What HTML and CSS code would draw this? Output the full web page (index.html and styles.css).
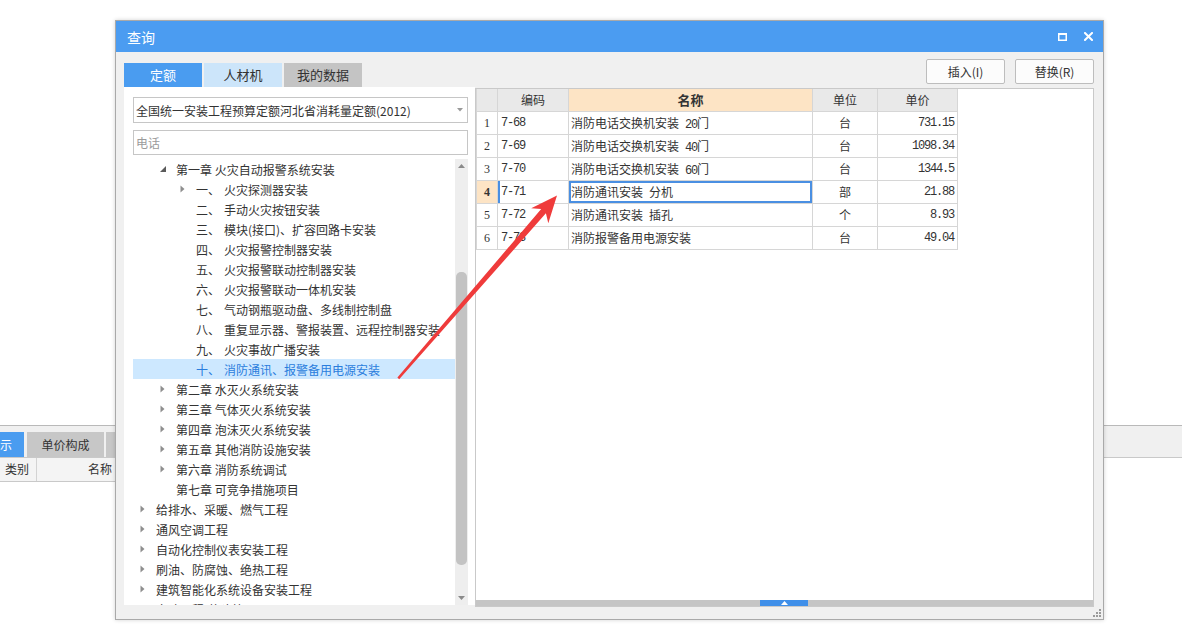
FILE: index.html
```html
<!DOCTYPE html>
<html lang="zh-CN">
<head>
<meta charset="utf-8">
<title>查询</title>
<link rel="stylesheet" href="styles.css">
</head>
<body>
<div class="app">
  <div class="app-band">
    <div class="app-tab app-tab-active">显示</div>
    <div class="app-tab app-tab-gray">单价构成</div>
    <div class="app-tab app-tab-gray app-tab-more">工料机显示</div>
  </div>
  <div class="app-grid-head">
    <div class="app-col app-col-type">类别</div>
    <div class="app-col app-col-name">名称</div>
  </div>
</div>

<div class="dialog">
  <div class="titlebar">
    <span class="title">查询</span>
    <div class="win-btns">
      <svg class="win-icon" width="9" height="8" viewBox="0 0 9 8"><rect x="0.75" y="1" width="7.5" height="6.25" fill="none" stroke="#fff" stroke-width="1.5"/><rect x="0" y="0" width="9" height="2" fill="#fff"/></svg>
      <svg class="win-icon" width="9" height="9" viewBox="0 0 9 9"><path d="M1 1 L8 8 M8 1 L1 8" stroke="#fff" stroke-width="2" stroke-linecap="square"/></svg>
    </div>
  </div>

  <div class="toolbar">
    <div class="tabs">
      <div class="tab tab-active">定额</div>
      <div class="tab tab-light">人材机</div>
      <div class="tab tab-gray">我的数据</div>
    </div>
    <div class="actions">
      <button class="btn">插入(I)</button>
      <button class="btn">替换(R)</button>
    </div>
  </div>

  <div class="main">
    <div class="left">
      <div class="combo">
        <span class="combo-text">全国统一安装工程预算定额河北省消耗量定额(2012)</span>
        <svg width="6" height="4" viewBox="0 0 6 4"><path d="M0 0 L6 0 L3 3.5Z" fill="#9a9a9a"/></svg>
      </div>
      <div class="search">电话</div>
      <div class="tree-wrap">
        <div class="tree">
          <div class="row l2"><span class="tw"><svg width="6" height="6" viewBox="0 0 6 6"><path d="M6 0 L6 6 L0 6Z" fill="#5a5a5a"/></svg></span><span class="txt">第一章 火灾自动报警系统安装</span></div>
          <div class="row l3"><span class="tw"><svg width="5" height="8" viewBox="0 0 5 8"><path d="M0.5 0.5 L4.5 4 L0.5 7.5Z" fill="#8e8e8e"/></svg></span><span class="num">一、</span><span class="txt">火灾探测器安装</span></div>
          <div class="row l3"><span class="tw"></span><span class="num">二、</span><span class="txt">手动火灾按钮安装</span></div>
          <div class="row l3"><span class="tw"></span><span class="num">三、</span><span class="txt">模块(接口)、扩容回路卡安装</span></div>
          <div class="row l3"><span class="tw"></span><span class="num">四、</span><span class="txt">火灾报警控制器安装</span></div>
          <div class="row l3"><span class="tw"></span><span class="num">五、</span><span class="txt">火灾报警联动控制器安装</span></div>
          <div class="row l3"><span class="tw"></span><span class="num">六、</span><span class="txt">火灾报警联动一体机安装</span></div>
          <div class="row l3"><span class="tw"></span><span class="num">七、</span><span class="txt">气动钢瓶驱动盘、多线制控制盘</span></div>
          <div class="row l3"><span class="tw"></span><span class="num">八、</span><span class="txt">重复显示器、警报装置、远程控制器安装</span></div>
          <div class="row l3"><span class="tw"></span><span class="num">九、</span><span class="txt">火灾事故广播安装</span></div>
          <div class="row l3 selected"><span class="tw"></span><span class="num">十、</span><span class="txt">消防通讯、报警备用电源安装</span></div>
          <div class="row l2"><span class="tw"><svg width="5" height="8" viewBox="0 0 5 8"><path d="M0.5 0.5 L4.5 4 L0.5 7.5Z" fill="#8e8e8e"/></svg></span><span class="txt">第二章 水灭火系统安装</span></div>
          <div class="row l2"><span class="tw"><svg width="5" height="8" viewBox="0 0 5 8"><path d="M0.5 0.5 L4.5 4 L0.5 7.5Z" fill="#8e8e8e"/></svg></span><span class="txt">第三章 气体灭火系统安装</span></div>
          <div class="row l2"><span class="tw"><svg width="5" height="8" viewBox="0 0 5 8"><path d="M0.5 0.5 L4.5 4 L0.5 7.5Z" fill="#8e8e8e"/></svg></span><span class="txt">第四章 泡沫灭火系统安装</span></div>
          <div class="row l2"><span class="tw"><svg width="5" height="8" viewBox="0 0 5 8"><path d="M0.5 0.5 L4.5 4 L0.5 7.5Z" fill="#8e8e8e"/></svg></span><span class="txt">第五章 其他消防设施安装</span></div>
          <div class="row l2"><span class="tw"><svg width="5" height="8" viewBox="0 0 5 8"><path d="M0.5 0.5 L4.5 4 L0.5 7.5Z" fill="#8e8e8e"/></svg></span><span class="txt">第六章 消防系统调试</span></div>
          <div class="row l2"><span class="tw"></span><span class="txt">第七章 可竞争措施项目</span></div>
          <div class="row l1"><span class="tw"><svg width="5" height="8" viewBox="0 0 5 8"><path d="M0.5 0.5 L4.5 4 L0.5 7.5Z" fill="#8e8e8e"/></svg></span><span class="txt">给排水、采暖、燃气工程</span></div>
          <div class="row l1"><span class="tw"><svg width="5" height="8" viewBox="0 0 5 8"><path d="M0.5 0.5 L4.5 4 L0.5 7.5Z" fill="#8e8e8e"/></svg></span><span class="txt">通风空调工程</span></div>
          <div class="row l1"><span class="tw"><svg width="5" height="8" viewBox="0 0 5 8"><path d="M0.5 0.5 L4.5 4 L0.5 7.5Z" fill="#8e8e8e"/></svg></span><span class="txt">自动化控制仪表安装工程</span></div>
          <div class="row l1"><span class="tw"><svg width="5" height="8" viewBox="0 0 5 8"><path d="M0.5 0.5 L4.5 4 L0.5 7.5Z" fill="#8e8e8e"/></svg></span><span class="txt">刷油、防腐蚀、绝热工程</span></div>
          <div class="row l1"><span class="tw"><svg width="5" height="8" viewBox="0 0 5 8"><path d="M0.5 0.5 L4.5 4 L0.5 7.5Z" fill="#8e8e8e"/></svg></span><span class="txt">建筑智能化系统设备安装工程</span></div>
          <div class="row l1"><span class="tw"><svg width="5" height="8" viewBox="0 0 5 8"><path d="M0.5 0.5 L4.5 4 L0.5 7.5Z" fill="#8e8e8e"/></svg></span><span class="txt">市政工程(仿建筑)</span></div>
        </div>
        <div class="vscroll">
          <div class="vs-btn"><svg width="7" height="4" viewBox="0 0 7 4"><path d="M0 4 L3.5 0 L7 4Z" fill="#8a8a8a"/></svg></div>
          <div class="vs-track"><div class="vs-thumb"></div></div>
          <div class="vs-btn"><svg width="7" height="4" viewBox="0 0 7 4"><path d="M0 0 L7 0 L3.5 4Z" fill="#8a8a8a"/></svg></div>
        </div>
      </div>
    </div>

    <div class="right">
      <div class="grid-area">
        <div class="grid">
          <div class="c hd"></div>
          <div class="c hd ctr">编码</div>
          <div class="c hd hd-active ctr">名称</div>
          <div class="c hd ctr">单位</div>
          <div class="c hd ctr">单价</div>

          <div class="c rn">1</div>
          <div class="c code">7-68</div>
          <div class="c name">消防电话交换机安装<span class="m"> 20</span>门</div>
          <div class="c ctr">台</div>
          <div class="c price">731.15</div>

          <div class="c rn">2</div>
          <div class="c code">7-69</div>
          <div class="c name">消防电话交换机安装<span class="m"> 40</span>门</div>
          <div class="c ctr">台</div>
          <div class="c price">1098.34</div>

          <div class="c rn">3</div>
          <div class="c code">7-70</div>
          <div class="c name">消防电话交换机安装<span class="m"> 60</span>门</div>
          <div class="c ctr">台</div>
          <div class="c price">1344.5</div>

          <div class="c rn rn-active">4</div>
          <div class="c code code-active">7-71</div>
          <div class="c name name-active">消防通讯安装<span class="m"> </span>分机</div>
          <div class="c ctr">部</div>
          <div class="c price">21.88</div>

          <div class="c rn">5</div>
          <div class="c code">7-72</div>
          <div class="c name">消防通讯安装<span class="m"> </span>插孔</div>
          <div class="c ctr">个</div>
          <div class="c price">8.93</div>

          <div class="c rn">6</div>
          <div class="c code">7-73</div>
          <div class="c name">消防报警备用电源安装</div>
          <div class="c ctr">台</div>
          <div class="c price">49.04</div>
        </div>
      </div>
      <div class="hbar">
        <div class="hthumb"><svg width="7" height="4" viewBox="0 0 7 4"><path d="M0 4 L3.5 0 L7 4Z" fill="#fff"/></svg></div>
      </div>
    </div>
  </div>

  <div class="footer">
    <svg width="8" height="8" viewBox="0 0 8 8">
      <rect x="6" y="0" width="2" height="2" fill="#9a9a9a"/>
      <rect x="3" y="3" width="2" height="2" fill="#9a9a9a"/>
      <rect x="6" y="3" width="2" height="2" fill="#9a9a9a"/>
      <rect x="0" y="6" width="2" height="2" fill="#9a9a9a"/>
      <rect x="3" y="6" width="2" height="2" fill="#9a9a9a"/>
      <rect x="6" y="6" width="2" height="2" fill="#9a9a9a"/>
    </svg>
  </div>
</div>

<svg class="annot" width="1182" height="632" viewBox="0 0 1182 632">
  <polygon points="557,195.5 548.3,223.2 545.9,213.3 399.2,379.2 397.4,377.6 541.2,209.0 531.2,208.3" fill="#ef3b3b"/>
</svg>
</body>
</html>
```

FILE: styles.css
```css
* { box-sizing: border-box; }

html, body {
  margin: 0;
  padding: 0;
}

body {
  width: 1182px;
  height: 632px;
  overflow: hidden;
  position: relative;
  background: #ffffff;
  font-family: "Noto Sans CJK SC", "Microsoft YaHei", sans-serif;
  font-size: 12px;
  color: #333333;
}

/* ---------- background application ---------- */
.app {
  padding-top: 425px;
}

.app-band {
  height: 33px;
  border-top: 1px solid #b9b9b9;
  border-bottom: 1px solid #c9c9c9;
  background: #f0f0f0;
  padding-top: 6px;
  display: flex;
  align-items: flex-end;
}

.app-tab {
  height: 25px;
  line-height: 25px;
  text-align: center;
  white-space: nowrap;
  overflow: hidden;
}

.app-tab-active {
  width: 48px;
  margin-left: -24px;
  background: #4a9cf0;
  color: #ffffff;
}

.app-tab-gray {
  width: 77px;
  margin-left: 3px;
  background: #c7c7c7;
  color: #333333;
}

.app-tab-more {
  width: 90px;
  margin-left: 2px;
}

.app-grid-head {
  width: 115px;
  height: 24px;
  display: flex;
  background: #f4f4f4;
  border-bottom: 1px solid #c9c9c9;
}

.app-col {
  line-height: 22px;
}

.app-col-type {
  width: 37px;
  padding-left: 5px;
  border-right: 1px solid #d3d3d3;
}

.app-col-name {
  flex: 1;
  text-align: right;
  padding-right: 3px;
}

/* ---------- dialog ---------- */
.dialog {
  position: absolute;
  left: 115px;
  top: 20px;
  width: 989px;
  height: 600px;
  border: 1px solid #a9a9a9;
  background: #f0f0f0;
  display: flex;
  flex-direction: column;
  box-shadow: 0 0 4px rgba(0, 0, 0, 0.18);
}

.titlebar {
  height: 31px;
  flex: none;
  background: #4b9cf1;
  color: #ffffff;
  font-size: 14px;
  display: flex;
  align-items: center;
  justify-content: space-between;
  padding: 0 10px 0 11px;
}

.win-btns {
  display: flex;
  align-items: center;
  gap: 17px;
}

.win-icon {
  display: block;
}

.toolbar {
  height: 35px;
  flex: none;
  display: flex;
  justify-content: space-between;
  padding: 0 9px 0 8px;
}

.tabs {
  align-self: flex-end;
  display: flex;
  gap: 2px;
}

.tab {
  width: 78px;
  height: 24px;
  line-height: 24px;
  text-align: center;
  font-size: 13px;
}

.tab-active {
  background: #4a9cf0;
  color: #ffffff;
}

.tab-light {
  background: #cce5fa;
  color: #333333;
}

.tab-gray {
  background: #c4c4c4;
  color: #333333;
}

.actions {
  padding-top: 7px;
  display: flex;
  gap: 10px;
}

.btn {
  width: 79px;
  height: 25px;
  border: 1px solid #bdbdbd;
  border-radius: 2px;
  background: #fcfcfc;
  font-family: inherit;
  font-size: 12px;
  color: #333333;
  padding: 0;
}

.main {
  height: 520px;
  flex: none;
  display: flex;
  align-items: flex-start;
  padding: 0 9px 0 8px;
}

/* ---------- left panel ---------- */
.left {
  width: 351px;
  height: 518px;
  background: #ffffff;
  padding: 10px 7px 0 9px;
  display: flex;
  flex-direction: column;
}

.combo {
  height: 26px;
  flex: none;
  border: 1px solid #c6c6c6;
  display: flex;
  align-items: center;
  justify-content: space-between;
  padding: 0 4px 0 2px;
}

.combo svg {
  display: block;
}

.search {
  height: 25px;
  flex: none;
  margin-top: 7px;
  border: 1px solid #c6c6c6;
  color: #9b9b9b;
  line-height: 23px;
  padding-left: 2px;
}

.tree-wrap {
  margin-top: 4px;
  flex: 1;
  min-height: 0;
  display: flex;
}

.tree {
  flex: 1;
  min-width: 0;
  overflow: hidden;
}

.row {
  height: 20px;
  display: flex;
  align-items: center;
  white-space: nowrap;
  color: #333333;
}

.row.l1 { padding-left: 7px; }
.row.l2 { padding-left: 27px; }
.row.l3 { padding-left: 47px; }

.row.selected {
  background: #cde8ff;
  color: #2a7ddd;
}

.tw {
  width: 16px;
  flex: none;
  display: flex;
  align-items: center;
}

.tw svg {
  display: block;
}

.num {
  width: 28px;
  flex: none;
}

.vscroll {
  width: 13px;
  flex: none;
  background: #eeeeee;
  display: flex;
  flex-direction: column;
}

.vs-btn {
  height: 14px;
  flex: none;
  display: flex;
  align-items: center;
  justify-content: center;
}

.vs-btn svg {
  display: block;
}

.vs-track {
  flex: 1;
  padding: 99px 1px 0 1px;
}

.vs-thumb {
  height: 293px;
  border-radius: 5px;
  background: #c3c3c3;
}

/* ---------- right panel ---------- */
.right {
  width: 619px;
  height: 519px;
  margin-top: 1px;
  border: 1px solid #c9c9c9;
  background: #ffffff;
  display: flex;
  flex-direction: column;
}

.grid-area {
  flex: 1;
  min-height: 0;
}

.grid {
  display: grid;
  grid-template-columns: 21px 71px 244px 65px 80px;
  grid-auto-rows: 23px;
  width: max-content;
  border-left: 1px solid #d6d6d6;
}

.c {
  border-right: 1px solid #d6d6d6;
  border-bottom: 1px solid #d6d6d6;
  line-height: 22px;
  white-space: nowrap;
  overflow: hidden;
}

.hd {
  background: #e9e9e9;
  font-size: 12px;
}

.hd-active {
  background: #fde4c5;
  font-weight: bold;
  font-size: 13px;
}

.ctr {
  text-align: center;
}

.rn {
  text-align: center;
  font-family: "Liberation Serif", "Noto Sans CJK SC", serif;
  font-size: 12px;
}

.rn-active {
  background: #fde4c5;
  font-weight: bold;
}

.code {
  padding-left: 3px;
  font-family: "Liberation Mono", "Noto Sans CJK SC", monospace;
  font-size: 12px;
  letter-spacing: -1.2px;
}

.code-active {
  box-shadow: inset 2px 0 0 #4a8fe2;
}

.name {
  padding-left: 2px;
}

.name-active {
  box-shadow: inset 0 0 0 2px #4a8fe2;
}

.m {
  font-family: "Liberation Mono", monospace;
  font-size: 12px;
  letter-spacing: -1.2px;
  white-space: pre;
}

.price {
  text-align: right;
  padding-right: 3px;
  font-family: "Liberation Mono", "Noto Sans CJK SC", monospace;
  font-size: 12px;
  letter-spacing: -1.2px;
}

.hbar {
  height: 6px;
  flex: none;
  background: #c5c5c5;
  display: flex;
}

.hthumb {
  width: 48px;
  margin-left: 284px;
  background: #3f8fe9;
  display: flex;
  align-items: center;
  justify-content: center;
}

.hthumb svg {
  display: block;
}

/* ---------- footer ---------- */
.footer {
  flex: 1;
  display: flex;
  justify-content: flex-end;
  align-items: flex-end;
  padding: 0 2px 2px 0;
}

.footer svg {
  display: block;
}

/* ---------- annotation arrow ---------- */
.annot {
  position: absolute;
  left: 0;
  top: 0;
  pointer-events: none;
}
```
